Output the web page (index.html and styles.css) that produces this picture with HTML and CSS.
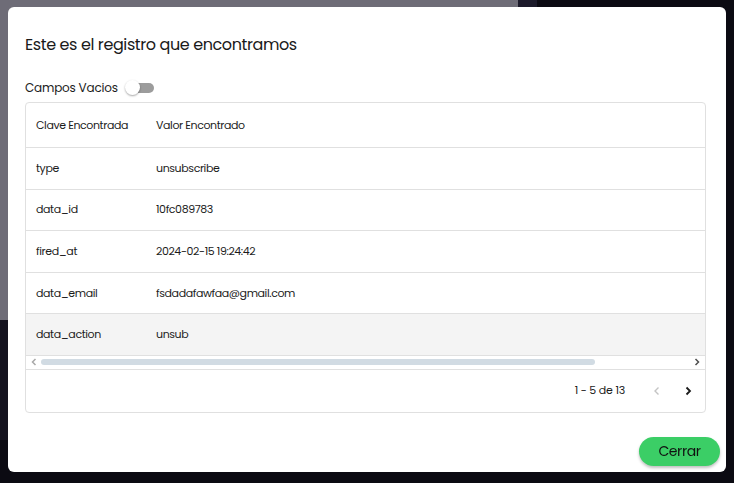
FILE: index.html
```html
<!DOCTYPE html>
<html lang="es">
<head>
    <meta charset="UTF-8">
    <meta name="viewport" content="width=device-width, initial-scale=1.0">
    <title>Registro</title>
    <link rel="stylesheet" href="styles.css">
</head>
<body>
    <div class="backdrop">
        <div class="app-panel"></div>
        <div class="app-side"></div>
        <div class="app-low"></div>
    </div>

    <div class="dialog">
        <h2 class="dialog-title">Este es el registro que encontramos</h2>

        <div class="switch-row">
            <span>Campos Vacios</span>
            <span class="switch"><span class="track"></span><span class="knob"></span></span>
        </div>

        <div class="table-box">
            <div class="row head">
                <div class="cell key">Clave Encontrada</div>
                <div class="cell">Valor Encontrado</div>
            </div>
            <div class="row">
                <div class="cell key">type</div>
                <div class="cell">unsubscribe</div>
            </div>
            <div class="row">
                <div class="cell key">data_id</div>
                <div class="cell">10fc089783</div>
            </div>
            <div class="row">
                <div class="cell key">fired_at</div>
                <div class="cell">2024-02-15 19:24:42</div>
            </div>
            <div class="row">
                <div class="cell key">data_email</div>
                <div class="cell">fsdadafawfaa@gmail.com</div>
            </div>
            <div class="row hover">
                <div class="cell key">data_action</div>
                <div class="cell">unsub</div>
            </div>

            <div class="hscroll">
                <svg class="sc-arrow" width="8" height="8" viewBox="0 0 8 8"><path d="M5.5 1 L2.5 4 L5.5 7" fill="none" stroke="#a8a8a8" stroke-width="1.5"/></svg>
                <div class="sc-track"><div class="sc-thumb"></div></div>
                <svg class="sc-arrow" width="8" height="8" viewBox="0 0 8 8"><path d="M2.5 1 L5.5 4 L2.5 7" fill="none" stroke="#505050" stroke-width="1.5"/></svg>
            </div>

            <div class="pager">
                <span class="pager-text">1 - 5 de 13</span>
                <button class="pg-btn" disabled>
                    <svg width="12" height="12" viewBox="0 0 12 12"><path d="M7.5 2.5 L4 6 L7.5 9.5" fill="none" stroke="#c4c4c4" stroke-width="1.4"/></svg>
                </button>
                <button class="pg-btn">
                    <svg width="12" height="12" viewBox="0 0 12 12"><path d="M4.5 2.5 L8 6 L4.5 9.5" fill="none" stroke="#1a1a1a" stroke-width="1.8"/></svg>
                </button>
            </div>
        </div>

        <div class="actions">
            <button class="btn-close">Cerrar</button>
        </div>
    </div>
</body>
</html>
```

FILE: styles.css
```css
html, body {
    margin: 0;
    padding: 0;
    height: 100%;
}
body {
    background: #0b0a12;
    font-family: "Poppins", "Lato", "Noto Sans", sans-serif;
    color: #1c1c1c;
    overflow: hidden;
}
.backdrop {
    position: fixed;
    inset: 0;
}
.app-panel {
    position: absolute;
    left: 0;
    top: 0;
    width: 518px;
    height: 320px;
    background: #6e6c77;
}
.app-side {
    position: absolute;
    left: 518px;
    top: 0;
    width: 19px;
    height: 320px;
    background: #1c1a2a;
}
.app-low {
    position: absolute;
    left: 0;
    top: 320px;
    width: 537px;
    height: 120px;
    background: #15131f;
}
.dialog {
    position: fixed;
    left: 8px;
    top: 7px;
    width: 718px;
    height: 465px;
    box-sizing: border-box;
    background: #ffffff;
    border-radius: 6px;
    padding: 26px 20px 6px 17px;
    display: flex;
    flex-direction: column;
}
.dialog-title {
    margin: 0;
    font-size: 16px;
    font-weight: 400;
    letter-spacing: -0.4px;
    line-height: 24px;
    color: #1a1a1a;
}
.switch-row {
    display: flex;
    align-items: center;
    gap: 7px;
    margin-top: 19px;
    height: 24px;
    font-size: 12px;
    letter-spacing: -0.2px;
}
.switch {
    position: relative;
    width: 30px;
    height: 16px;
    display: inline-block;
}
.track {
    position: absolute;
    left: 4px;
    top: 3px;
    width: 25px;
    height: 10px;
    border-radius: 5px;
    background: #9c9c9c;
}
.knob {
    position: absolute;
    left: 0;
    top: 0;
    width: 15px;
    height: 15px;
    border-radius: 50%;
    background: #fff;
    box-shadow: 0 1px 2px rgba(0,0,0,0.35);
}
.table-box {
    margin-top: 2px;
    border: 1px solid #e0e0e0;
    border-radius: 4px;
    font-size: 11px;
    letter-spacing: -0.4px;
}
.row {
    display: flex;
    align-items: center;
    height: 40.6px;
    border-bottom: 1px solid #e0e0e0;
}
.row.head {
    height: 44px;
}
.row.hover {
    background: #f4f4f4;
}
.cell {
    padding: 0 10px;
    white-space: nowrap;
}
.cell.key {
    width: 100px;
}
.hscroll {
    display: flex;
    align-items: center;
    height: 13px;
    padding: 0 4px;
    gap: 3px;
    border-bottom: 1px solid #e0e0e0;
}
.sc-track {
    flex: 1;
    height: 6px;
}
.sc-thumb {
    width: 554px;
    height: 6px;
    border-radius: 3px;
    background: #d1dbe3;
}
.pager {
    display: flex;
    align-items: center;
    justify-content: flex-end;
    height: 42px;
    padding-right: 2px;
    letter-spacing: -0.2px;
}
.pager-text {
    margin-right: 16px;
}
.pg-btn {
    width: 31px;
    height: 28px;
    border: none;
    background: none;
    padding: 0;
    display: flex;
    align-items: center;
    justify-content: center;
    cursor: pointer;
}
.actions {
    margin-top: auto;
    display: flex;
    justify-content: flex-end;
}
.btn-close {
    width: 81px;
    height: 29px;
    border: none;
    border-radius: 15px;
    background: #3bce66;
    color: #111111;
    font-family: inherit;
    font-size: 14px;
    letter-spacing: -0.4px;
    box-shadow: 0 2px 3px rgba(0,0,0,0.25);
    margin-right: -14px;
    cursor: pointer;
}
```
